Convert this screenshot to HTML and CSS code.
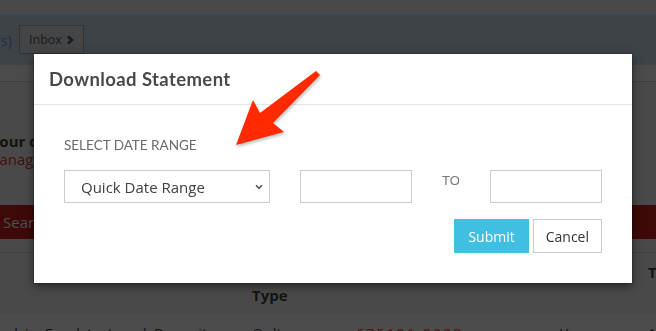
FILE: index.html
```html
<!DOCTYPE html>
<html lang="en">
<head>
  <meta charset="UTF-8">
  <meta name="viewport" content="width=device-width, initial-scale=1.0">
  <title>Statements</title>
  <link rel="stylesheet" href="styles.css">
</head>
<body>
  <div class="page">
    <div class="topbar"></div>
    <div class="subnav">
      <div class="crumb"><span>Statement(s)</span></div>
      <a class="inbox-btn" href="#">Inbox
        <svg width="8" height="10" viewBox="0 0 8 10"><polyline points="2,1.5 6,5 2,8.5" fill="none" stroke="#555" stroke-width="2.4"/></svg>
      </a>
    </div>
    <div class="toolstrip"></div>

    <section class="notice">
      <p class="notice-title">Your documents are ready</p>
      <p class="notice-link">Manage your statements</p>
    </section>

    <div class="search-bar">Search</div>
    <div class="filter-gap"></div>

    <table class="txn-table">
      <colgroup>
        <col class="c-desc"><col class="c-type"><col class="c-ref"><col class="c-flag"><col class="c-amt">
      </colgroup>
      <thead>
        <tr>
          <th></th>
          <th>Type</th>
          <th></th>
          <th></th>
          <th class="th-top">Total</th>
        </tr>
      </thead>
      <tbody>
        <tr class="striped">
          <td class="desc">Credited in Fund test and Deposits</td>
          <td>Online</td>
          <td class="ref">675101-2023</td>
          <td>Yes</td>
          <td>120.00</td>
        </tr>
      </tbody>
    </table>
  </div>

  <div class="backdrop"></div>

  <div class="modal">
    <div class="modal-header">
      <h1 class="modal-title">Download Statement</h1>
    </div>
    <div class="modal-body">
      <p class="field-label">SELECT DATE RANGE</p>
      <div class="range-row">
        <div class="select-wrap">
          <select class="range-select">
            <option>Quick Date Range</option>
            <option>Last 30 days</option>
            <option>Last 90 days</option>
          </select>
          <svg class="select-chevron" width="8" height="6" viewBox="0 0 8 6"><polyline points="1,1.2 4,4.3 7,1.2" fill="none" stroke="#555" stroke-width="1.6"/></svg>
        </div>
        <input class="date-input" type="text">
        <span class="to-label">TO</span>
        <input class="date-input" type="text">
      </div>
      <div class="modal-actions">
        <button class="btn btn-primary">Submit</button>
        <button class="btn btn-default">Cancel</button>
      </div>
    </div>
  </div>

  <svg class="callout-arrow" width="110" height="95" viewBox="225 60 110 95">
    <polygon points="316,71 260,113 253,100 236,145 284,132 273,123 320,75" fill="#ff2a00"/>
  </svg>
</body>
</html>
```

FILE: styles.css
```css
:root {
  --page-bg: #f6f6f6;
  --band: #cfdfed;
  --brand-red: #cb1e1e;
  --line: #e5e5e5;
  --field-border: #cccccc;
  --primary: #40bfe0;
}

body {
  margin: 0;
  font-family: "Open Sans", "Liberation Sans", sans-serif;
  background-color: var(--page-bg);
  overflow: hidden;
  height: 331px;
}

.page {
  width: 656px;
}

.topbar {
  height: 14px;
  border-bottom: 1px solid #d9edfa;
}

.subnav {
  height: 50px;
  background-color: var(--band);
  display: flex;
  align-items: flex-start;
  gap: 7px;
  padding-top: 10px;
  box-sizing: border-box;
}

.crumb {
  width: 12px;
  display: flex;
  justify-content: flex-end;
  overflow: hidden;
  white-space: nowrap;
  font-size: 15px;
  line-height: 30px;
  color: #67a7e3;
}

.inbox-btn {
  display: flex;
  align-items: center;
  gap: 4px;
  height: 29px;
  box-sizing: border-box;
  padding: 0 9px;
  background-color: #e3e6e9;
  border: 1px solid #a7adb4;
  color: #5f5f5f;
  font-size: 12.5px;
  text-decoration: none;
}

.toolstrip {
  height: 16px;
  border-bottom: 1px solid #cfcfcf;
  background-color: #fafafa;
}

.notice {
  padding-top: 50px;
  height: 73px;
}

.notice p {
  margin: 0;
  font-size: 15px;
  line-height: 18px;
  white-space: nowrap;
}

.notice-title {
  font-weight: bold;
  color: #404040;
  margin-left: -10px !important;
}

.notice-link {
  color: #dc3939;
  margin-left: -14px !important;
}

.search-bar {
  height: 34px;
  background-color: var(--brand-red);
  color: #fff;
  font-size: 15px;
  line-height: 34px;
  padding-left: 3px;
}

.filter-gap {
  height: 13px;
  border-bottom: 1px solid #d5d5d5;
}

.txn-table {
  table-layout: fixed;
  width: 760px;
  border-collapse: collapse;
  font-size: 15px;
  color: #464646;
}

.c-desc { width: 252px; }
.c-type { width: 104px; }
.c-ref { width: 204px; }
.c-flag { width: 88px; }
.c-amt { width: 112px; }

.txn-table th {
  height: 46px;
  text-align: left;
  vertical-align: bottom;
  padding: 8px 0 7px;
  line-height: 23px;
  font-weight: bold;
}

.txn-table .th-top {
  vertical-align: top;
}

.txn-table td {
  padding: 8px 0;
  line-height: 23px;
  white-space: nowrap;
  overflow: hidden;
}

.striped {
  background-color: #fff;
}

.txn-table .desc {
  text-indent: -42px;
  word-spacing: 3px;
}

.txn-table .ref {
  color: #ff3c3c;
  letter-spacing: 1.5px;
}

.backdrop {
  position: fixed;
  inset: 0;
  background-color: rgba(0, 0, 0, 0.7);
}

/* modal */
.modal {
  position: absolute;
  left: 34px;
  top: 54px;
  width: 598px;
  background: #fff;
  box-shadow: 0 3px 9px rgba(0, 0, 0, 0.5), 0 0 0 1px rgba(0, 0, 0, 0.15);
}

.modal-header {
  padding: 15px;
  border-bottom: 1px solid var(--line);
}

.modal-title {
  margin: 0;
  font-family: Lato, "Open Sans", sans-serif;
  font-size: 18.5px;
  letter-spacing: 0.4px;
  line-height: 20px;
  font-weight: bold;
  color: #4a4a4a;
}

.modal-body {
  padding: 30px;
}

.field-label {
  margin: 0 0 15px;
  font-family: Lato, "Liberation Sans", sans-serif;
  font-size: 13.5px;
  line-height: 20px;
  color: #6a6a6a;
}

.range-row {
  display: flex;
  align-items: flex-start;
  justify-content: space-between;
}

.select-wrap {
  position: relative;
  width: 206px;
}

.range-select {
  appearance: none;
  -webkit-appearance: none;
  width: 206px;
  height: 33px;
  border: 1px solid var(--field-border);
  border-radius: 0;
  background: #fff;
  padding: 0 0 0 16px;
  font-family: "Open Sans", sans-serif;
  font-size: 15px;
  color: #404040;
}

.select-chevron {
  position: absolute;
  right: 7px;
  top: 14px;
}

.date-input {
  width: 112px;
  height: 33px;
  box-sizing: border-box;
  border: 1px solid var(--field-border);
  border-radius: 0;
  margin: 0;
  padding: 0 8px;
}

.to-label {
  font-family: "Liberation Sans", Arial, sans-serif;
  font-size: 13px;
  line-height: 20px;
  color: #777;
  padding-top: 1px;
}

.modal-actions {
  display: flex;
  justify-content: flex-end;
  gap: 4px;
  margin-top: 16px;
}

.btn {
  height: 34px;
  padding: 0 13px;
  font-family: "Open Sans", sans-serif;
  font-size: 14px;
  border-radius: 0;
  cursor: pointer;
}

.btn-primary {
  background-color: var(--primary);
  border: 1px solid var(--primary);
  color: #fff;
}

.btn-default {
  background-color: #fff;
  border: 1px solid var(--field-border);
  color: #333;
  padding: 0 12px;
}

.callout-arrow {
  position: absolute;
  left: 225px;
  top: 60px;
  filter: drop-shadow(1px 2px 1.5px rgba(0, 0, 0, 0.25));
}
```
